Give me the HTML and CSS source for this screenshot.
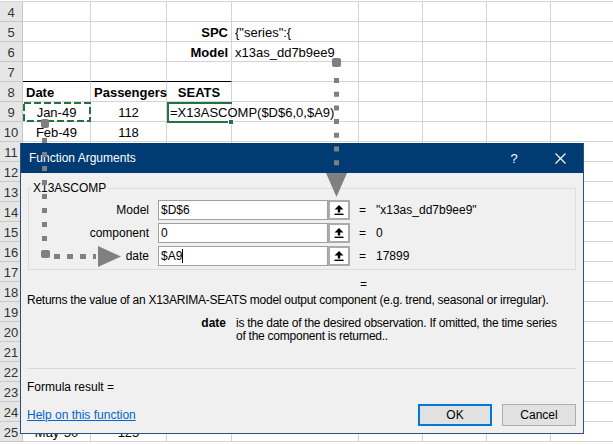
FILE: index.html
```html
<!DOCTYPE html>
<html lang="en">
<head>
    <meta charset="UTF-8">
    <title>Function Arguments</title>
    <link rel="stylesheet" href="styles.css">
</head>
<body>

    <!-- Tabellenblatt -->
    <table class="sheet">
        <colgroup>
            <col class="col-head"><col class="col-a"><col class="col-b"><col class="col-c"><col class="col-d">
            <col class="col-x"><col class="col-x"><col class="col-x"><col class="col-x">
        </colgroup>
        <tr><th>4</th><td></td><td></td><td></td><td></td><td></td><td></td><td></td><td></td></tr>
        <tr><th>5</th><td></td><td></td><td class="bold right">SPC</td><td>{"series":{</td><td></td><td></td><td></td><td></td></tr>
        <tr><th>6</th><td></td><td></td><td class="bold right">Model</td><td>x13as_dd7b9ee9</td><td></td><td></td><td></td><td></td></tr>
        <tr class="above-head"><th>7</th><td></td><td></td><td></td><td></td><td></td><td></td><td></td><td></td></tr>
        <tr><th>8</th><td class="bold">Date</td><td class="bold">Passengers</td><td class="bold center">SEATS</td><td></td><td></td><td></td><td></td><td></td></tr>
        <tr><th>9</th><td class="center">Jan-49</td><td class="center">112</td><td class="formula">=X13ASCOMP($D$6,0,$A9)</td><td></td><td></td><td></td><td></td><td></td></tr>
        <tr><th>10</th><td class="center">Feb-49</td><td class="center">118</td><td></td><td></td><td></td><td></td><td></td><td></td></tr>
        <tr><th>11</th><td></td><td></td><td></td><td></td><td></td><td></td><td></td><td></td></tr>
        <tr><th>12</th><td></td><td></td><td></td><td></td><td></td><td></td><td></td><td></td></tr>
        <tr><th>13</th><td></td><td></td><td></td><td></td><td></td><td></td><td></td><td></td></tr>
        <tr><th>14</th><td></td><td></td><td></td><td></td><td></td><td></td><td></td><td></td></tr>
        <tr><th>15</th><td></td><td></td><td></td><td></td><td></td><td></td><td></td><td></td></tr>
        <tr><th>16</th><td></td><td></td><td></td><td></td><td></td><td></td><td></td><td></td></tr>
        <tr><th>17</th><td></td><td></td><td></td><td></td><td></td><td></td><td></td><td></td></tr>
        <tr><th>18</th><td></td><td></td><td></td><td></td><td></td><td></td><td></td><td></td></tr>
        <tr><th>19</th><td></td><td></td><td></td><td></td><td></td><td></td><td></td><td></td></tr>
        <tr><th>20</th><td></td><td></td><td></td><td></td><td></td><td></td><td></td><td></td></tr>
        <tr><th>21</th><td></td><td></td><td></td><td></td><td></td><td></td><td></td><td></td></tr>
        <tr><th>22</th><td></td><td></td><td></td><td></td><td></td><td></td><td></td><td></td></tr>
        <tr><th>23</th><td></td><td></td><td></td><td></td><td></td><td></td><td></td><td></td></tr>
        <tr><th>24</th><td></td><td></td><td></td><td></td><td></td><td></td><td></td><td></td></tr>
        <tr><th>25</th><td class="center">May-50</td><td class="center">125</td><td></td><td></td><td></td><td></td><td></td><td></td></tr>
    </table>

    <!-- Dialog: Funktionsargumente -->
    <div class="dialog">
        <div class="titlebar">
            <span class="title">Function Arguments</span>
            <span class="title-btn">?</span>
            <span class="title-btn">
                <svg width="11" height="11" viewBox="0 0 11 11"><path d="M0.5 0.5L10.5 10.5M10.5 0.5L0.5 10.5" stroke="#fff" stroke-width="1.2" fill="none"/></svg>
            </span>
        </div>

        <div class="dialog-body">
            <fieldset class="args">
                <legend>X13ASCOMP</legend>

                <div class="arg-row">
                    <label>Model</label>
                    <div class="arg-input">$D$6</div>
                    <span class="ref-btn">
                        <svg width="10" height="10" viewBox="0 0 10 10"><path d="M5 0L0.5 4.5H3.8V7.6H6.2V4.5H9.5Z" fill="#000"/><rect x="0.5" y="8.6" width="9" height="1.4" fill="#000"/></svg>
                    </span>
                    <span class="eq">=</span>
                    <span class="arg-value">"x13as_dd7b9ee9"</span>
                </div>

                <div class="arg-row">
                    <label>component</label>
                    <div class="arg-input">0</div>
                    <span class="ref-btn">
                        <svg width="10" height="10" viewBox="0 0 10 10"><path d="M5 0L0.5 4.5H3.8V7.6H6.2V4.5H9.5Z" fill="#000"/><rect x="0.5" y="8.6" width="9" height="1.4" fill="#000"/></svg>
                    </span>
                    <span class="eq">=</span>
                    <span class="arg-value">0</span>
                </div>

                <div class="arg-row">
                    <label>date</label>
                    <div class="arg-input">$A9<span class="caret"></span></div>
                    <span class="ref-btn">
                        <svg width="10" height="10" viewBox="0 0 10 10"><path d="M5 0L0.5 4.5H3.8V7.6H6.2V4.5H9.5Z" fill="#000"/><rect x="0.5" y="8.6" width="9" height="1.4" fill="#000"/></svg>
                    </span>
                    <span class="eq">=</span>
                    <span class="arg-value">17899</span>
                </div>
            </fieldset>

            <div class="result-eq"><span class="eq">=</span></div>

            <p class="desc">Returns the value of an X13ARIMA-SEATS model output component (e.g. trend, seasonal or irregular).</p>

            <div class="arg-help">
                <b>date</b>
                <span>is the date of the desired observation. If omitted, the time series of the component is returned..</span>
            </div>

            <hr class="sep">

            <div class="formula-result">Formula result =</div>

            <div class="dialog-footer">
                <a href="#" class="help-link">Help on this function</a>
                <button class="btn btn-ok">OK</button>
                <button class="btn">Cancel</button>
            </div>
        </div>
    </div>

    <!-- Markierungen und Pfeile -->
    <svg class="marks" width="613" height="445" viewBox="0 0 613 445">
        <rect x="24" y="103" width="66" height="18" fill="none" stroke="#217346" stroke-width="2" stroke-dasharray="7 3"/>
        <path d="M232 103H168V122H230" fill="none" stroke="#217346" stroke-width="2"/>
        <rect x="228.5" y="119.5" width="5" height="5" fill="#217346" stroke="#fff" stroke-width="1"/>

        <g fill="#808080">
            <rect x="332" y="58" width="9" height="9" rx="2"/>
            <rect x="41" y="119" width="8" height="9" rx="2"/>
            <rect x="41" y="250" width="9" height="8" rx="2"/>
            <polygon points="326,173 347,173 336.5,197"/>
            <polygon points="98,246 98,267 121,256.5"/>
        </g>
        <g stroke="#808080" stroke-width="5" fill="none">
            <path d="M336.5 78V170" stroke-dasharray="5 8.7"/>
            <path d="M44.5 138V246" stroke-dasharray="5 9"/>
            <path d="M54 256.5H96" stroke-dasharray="6 7"/>
        </g>
    </svg>

</body>
</html>
```

FILE: styles.css
```css
body {
    margin: 0;
    padding-top: 1px;
    background-color: #fff;
    overflow: hidden;
    font-family: 'Liberation Sans', sans-serif;
}

/* Tabellenblatt */

.sheet {
    border-collapse: separate;
    border-spacing: 0;
    border-top: 1px solid #d4d4d4;
    table-layout: fixed;
    width: 615px;
    font-size: 13px;
    color: #000;
}

.col-head { width: 23px; }
.col-a { width: 68px; }
.col-b { width: 76px; }
.col-c { width: 65px; }
.col-d { width: 127px; }
.col-x { width: 64px; }

.sheet tr {
    height: 20px;
}

.sheet td,
.sheet th {
    border-right: 1px solid #d4d4d4;
    border-bottom: 1px solid #d4d4d4;
    padding: 0 3px;
    white-space: nowrap;
    overflow: visible;
    line-height: 16px;
    vertical-align: bottom;
}

.sheet th {
    background-color: #e6e6e6;
    color: #333;
    font-weight: normal;
    text-align: center;
    padding: 0;
    border-color: #c8c8c8;
}

.sheet .bold { font-weight: bold; }
.sheet .right { text-align: right; }
.sheet .center { text-align: center; }

.above-head td:nth-of-type(-n+3) {
    border-bottom-color: #000;
}

/* Dialog */

.dialog {
    position: absolute;
    left: 20px;
    top: 143px;
    width: 564px;
    height: 291px;
    box-sizing: border-box;
    background-color: #f0f0f0;
    border: 1px solid #2c4f7c;
    border-top: none;
    font-family: 'Liberation Sans', sans-serif;
    font-size: 12px;
    color: #000;
}

.titlebar {
    height: 30px;
    background-color: #003b73;
    color: #fff;
    display: flex;
    align-items: center;
    padding-left: 8px;
}

.title {
    flex: 1;
}

.title-btn {
    width: 46px;
    height: 30px;
    display: flex;
    align-items: center;
    justify-content: center;
    font-size: 13px;
}

.dialog-body {
    padding: 0 7px 0 6px;
}

.args {
    margin: 8px 0 0 1px;
    padding: 0 0 3px;
    border: 1px solid #dcdcdc;
}

.args legend {
    margin-left: 2px;
    padding: 0 2px;
    line-height: 14px;
}

.arg-row {
    display: flex;
    align-items: center;
    height: 20px;
    margin-top: 3px;
}

.arg-row:first-of-type {
    margin-top: 5px;
}

.arg-row label {
    width: 120px;
    text-align: right;
}

.arg-input {
    margin-left: 9px;
    width: 170px;
    height: 20px;
    box-sizing: border-box;
    border: 1px solid #a0a0a0;
    background-color: #fff;
    padding-left: 2px;
    line-height: 18px;
    display: flex;
    align-items: center;
}

.caret {
    display: inline-block;
    width: 1px;
    height: 14px;
    background-color: #000;
}

.ref-btn {
    width: 22px;
    height: 20px;
    box-sizing: border-box;
    border: 2px solid #ababab;
    background-color: #fff;
    display: flex;
    align-items: center;
    justify-content: center;
}

.eq {
    margin-left: 9px;
    width: 17px;
    display: inline-block;
}

.result-eq {
    margin-top: 7px;
    padding-left: 324px;
    line-height: 14px;
}

.desc {
    margin: 2px 0 0;
    line-height: 14px;
    letter-spacing: -0.25px;
}

.arg-help {
    display: flex;
    margin-top: 10px;
    line-height: 13px;
    letter-spacing: -0.25px;
}

.arg-help b {
    width: 199px;
    flex-shrink: 0;
    text-align: right;
    letter-spacing: 0;
}

.arg-help span {
    margin-left: 10px;
    width: 326px;
}

.sep {
    margin: 25px 0 0;
    border: none;
    border-top: 1px solid #d9d9d9;
}

.formula-result {
    margin-top: 11px;
    line-height: 14px;
}

.dialog-footer {
    display: flex;
    align-items: center;
    margin-top: 10px;
}

.help-link {
    color: #0066cc;
    text-decoration: underline;
    margin-right: auto;
}

.btn {
    width: 74px;
    height: 22px;
    margin-left: 10px;
    box-sizing: border-box;
    background-color: #e1e1e1;
    border: 1px solid #adadad;
    font-family: inherit;
    font-size: 12px;
    padding: 0;
}

.btn-ok {
    border: 2px solid #0078d7;
}

/* Pfeile */

.marks {
    position: absolute;
    left: 0;
    top: 0;
    pointer-events: none;
}
```
